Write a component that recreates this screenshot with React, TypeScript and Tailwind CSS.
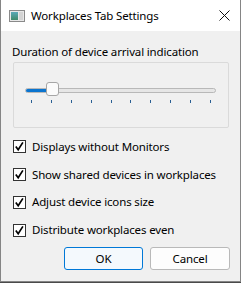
import React from "react";

const font = { fontFamily: '"Noto Sans", "Liberation Sans", sans-serif' };

function CheckRow({ label }: { label: string }) {
  return (
    <div className="flex h-[27.8px] items-center">
      <div className="flex h-[13px] w-[13px] items-center justify-center border border-[#333333] bg-white">
        <svg width="11" height="11" viewBox="0 0 11 11">
          <path d="M1.8 5.4 L4.2 8.8 L8.9 1.4" fill="none" stroke="#000" strokeWidth="1.7" />
        </svg>
      </div>
      <span className="ml-[6px] text-[11.5px] leading-[16px] tracking-[-0.15px] text-black">{label}</span>
    </div>
  );
}

export default function App() {
  const ticks = Array.from({ length: 10 });
  return (
    <div className="h-[283px] w-[241px] bg-[#4a4a4a]" style={font}>
      <div className="flex h-[282px] w-[241px] flex-col border-x border-b border-[#858585] bg-[#f0f0f0]">
        <div className="flex h-[31px] shrink-0 items-center bg-white">
          <svg className="ml-[8px]" width="16" height="12" viewBox="0 0 16 12">
            <rect x="0.5" y="0.5" width="15" height="11" fill="#e8e8e8" stroke="#8a8a8a" />
            <defs>
              <linearGradient id="g" x1="0" y1="0" x2="0" y2="1">
                <stop offset="0" stopColor="#5aa9b8" />
                <stop offset="1" stopColor="#3f8a6a" />
              </linearGradient>
            </defs>
            <rect x="2" y="2" width="7" height="8" fill="url(#g)" />
            <rect x="10" y="2" width="4" height="8" fill="#d4d4d4" />
          </svg>
          <span className="ml-[6px] text-[11.5px] leading-[16px] tracking-[-0.15px] text-black">Workplaces Tab Settings</span>
          <svg className="ml-auto mr-[10px]" width="11" height="11" viewBox="0 0 11 11">
            <path d="M0.5 0.5 L10.5 10.5 M10.5 0.5 L0.5 10.5" stroke="#111" strokeWidth="1" />
          </svg>
        </div>
        <div className="flex flex-1 flex-col pl-[11px] pr-[10px]">
          <div className="mt-[13px] text-[11.5px] leading-[16px] tracking-[-0.15px] text-black">Duration of device arrival indication</div>
          <div className="ml-[1px] mt-[2px] h-[66px] w-[216px] rounded-[2px] border border-[#dadada]">
            <div className="relative ml-[11px] mt-[25px] h-[5px] w-[191px] rounded-full border border-[#b8b8b8] bg-[#e6e6e6]">
              <div className="h-full w-[22px] rounded-l-full bg-[#0a74cf]" />
              <div className="absolute left-[20px] top-[-7px] h-[14px] w-[13px] rounded-[3px] border border-[#a6a6a6] bg-[#fbfbfb]" />
            </div>
            <div className="ml-[17px] mt-[7px] flex w-[180px] justify-between">
              {ticks.map((_, i) => (
                <div key={i} className="h-[3px] w-[1px] bg-[#2a5f93]" />
              ))}
            </div>
          </div>
          <div className="mt-[5px] flex flex-col pl-[1px]">
            <CheckRow label="Displays without Monitors" />
            <CheckRow label="Show shared devices in workplaces" />
            <CheckRow label="Adjust device icons size" />
            <CheckRow label="Distribute workplaces even" />
          </div>
          <div className="mt-[3px] flex justify-end gap-[7px]">
            <button className="h-[23px] w-[79px] rounded-[3px] border border-[#0078d7] bg-[#f4f9fd] text-[11.5px] tracking-[-0.15px] text-black" style={font}>
              OK
            </button>
            <button className="h-[23px] w-[80px] rounded-[3px] border border-[#b9b9b9] bg-[#fdfdfd] text-[11.5px] tracking-[-0.15px] text-black" style={font}>
              Cancel
            </button>
          </div>
        </div>
      </div>
    </div>
  );
}
